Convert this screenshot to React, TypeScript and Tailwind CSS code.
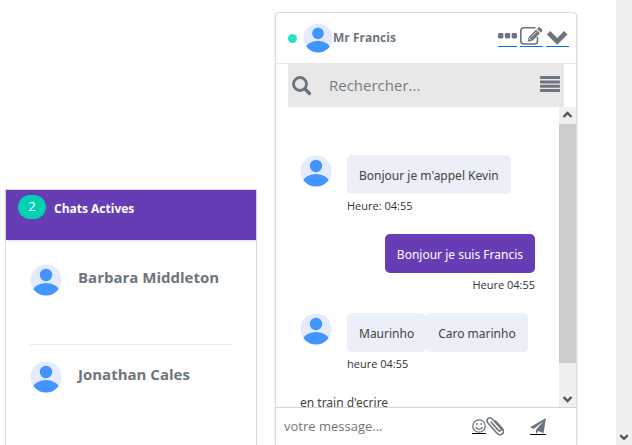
import type { ReactNode } from "react";

function Avatar({ small = false }: { small?: boolean }) {
  return (
    <svg viewBox="0 0 32 32" className={small ? "size-[30px] shrink-0" : "size-8 shrink-0"} role="img" aria-label="avatar">
      <defs>
        <clipPath id="face">
          <circle cx="16" cy="16" r="15.5" />
        </clipPath>
      </defs>
      <circle cx="16" cy="16" r="15.5" fill="#e4ebff" />
      <circle cx="16" cy="11" r="6.2" fill="#4294ff" />
      <ellipse cx="16" cy="28.5" rx="13.5" ry="9.5" fill="#4294ff" clipPath="url(#face)" />
    </svg>
  );
}

function DotsIcon() {
  return (
    <svg viewBox="0 0 19 20" className="h-5 w-[19px]" fill="#6c757d">
      <rect x="0" y="7" width="5.4" height="5.4" rx="1.4" />
      <rect x="6.8" y="7" width="5.4" height="5.4" rx="1.4" />
      <rect x="13.6" y="7" width="5.4" height="5.4" rx="1.4" />
    </svg>
  );
}

function EditIcon() {
  return (
    <svg viewBox="0 0 23 20" className="h-5 w-[23px]">
      <path d="M15 1.800H4Q.8 1.800.8 5v9.800q0 3.200 3.200 3.200h10.500q3 0 3-3v-3.500" fill="none" stroke="#6c757d" strokeWidth="1.600" strokeLinecap="round" />
      <path d="M7.800 15.800l1-4.800 7.400-7.400 3.800 3.700-7.500 7.500z" fill="#6c757d" />
      <path d="M17 2.800l1.300-1.300q.8-.7 1.600 0l2.100 2.100q.7.800 0 1.600L20.800 6.500z" fill="#6c757d" />
      <path d="M11 11.400l5.800-5.800M9.300 12.200l2 2" stroke="#fff" strokeWidth=".8" />
    </svg>
  );
}

function ChevronIcon() {
  return (
    <svg viewBox="0 0 23 20" className="h-5 w-[23px]">
      <path d="M2.600 6.800l8.600 8.600 8.600-8.600" fill="none" stroke="#6c757d" strokeWidth="4.800" />
    </svg>
  );
}

function SearchIcon() {
  return (
    <svg viewBox="0 0 20 20" className="size-5 shrink-0" fill="none" stroke="#6c757d">
      <circle cx="8" cy="8" r="6.500" strokeWidth="2.900" />
      <path d="M13 13l4.500 4.500" strokeWidth="3.400" strokeLinecap="round" />
    </svg>
  );
}

function LinesIcon() {
  return (
    <svg viewBox="0 0 20 16" className="h-4 w-5" fill="#6c757d">
      <rect width="20" height="3" rx=".6" />
      <rect y="4.400" width="20" height="3" rx=".6" />
      <rect y="8.700" width="20" height="3" rx=".6" />
      <rect y="13" width="20" height="3" rx=".6" />
    </svg>
  );
}

function SmileIcon() {
  return (
    <svg viewBox="0 0 14 14" className="size-3.5" fill="none" stroke="#6c757d">
      <circle cx="7" cy="7" r="6.200" strokeWidth="1.300" />
      <circle cx="4.800" cy="5" r=".9" fill="#6c757d" stroke="none" />
      <circle cx="9.200" cy="5" r=".9" fill="#6c757d" stroke="none" />
      <path d="M3.800 8.500q3.200 3.600 6.400 0" strokeWidth="1.200" strokeLinecap="round" />
    </svg>
  );
}

function ClipIcon() {
  return (
    <svg viewBox="0 0 18 20" className="h-5 w-[18px]">
      <path
        d="M5.200 6.200l7 7.900q1.400 1.400 2.500.4t-.2-2.500L6.500 3.200Q4 .7 1.900 2.500T2 7.100l8.500 9.600q3.200 3.400 5.800 1.200t-.3-5.700L9.500 5"
        fill="none"
        stroke="#6c757d"
        strokeWidth="1.600"
        strokeLinecap="round"
      />
    </svg>
  );
}

function PlaneIcon() {
  return (
    <svg viewBox="0 0 16 16" className="size-4" fill="#6c757d">
      <path d="M16 0L0 9.300l3.800 1.600L13.500 3 6 11.800V16l2.300-3 5.200 2.200z" />
    </svg>
  );
}

function ScrollArrow({ up = false }: { up?: boolean }) {
  return (
    <svg viewBox="0 0 17 17" className="h-[17px] w-full shrink-0" fill="none">
      <path d={up ? "M4.500 10l4-4 4 4" : "M4.500 7l4 4 4-4"} stroke="#555" strokeWidth="2.400" />
    </svg>
  );
}

function Contact({ name }: { name: string }) {
  return (
    <li className="flex h-[97px] items-start border-b border-[#ebebeb] pt-4 last:border-b-0">
      <Avatar />
      <a href="#" className="ml-4 text-[15px] leading-[26px] font-bold text-[#6c757d]">
        {name}
      </a>
    </li>
  );
}

function Bubble({ children, className }: { children: ReactNode; className: string }) {
  return <p className={`rounded-[5px] px-3 pt-[11px] pb-2 font-['Noto_Sans',sans-serif] text-xs leading-5 whitespace-nowrap ${className}`}>{children}</p>;
}

function Time({ children }: { children: ReactNode }) {
  return <p className="pt-1 text-[11px] leading-4 text-[#333]">{children}</p>;
}

function Received({ texts, time }: { texts: string[]; time: string }) {
  return (
    <li className="flex items-start">
      <Avatar />
      <div className="ml-[15px]">
        <div className="flex">
          {texts.map((text) => (
            <Bubble key={text} className="bg-[#ebeff7] text-[#444]">{text}</Bubble>
          ))}
        </div>
        <Time>{time}</Time>
      </div>
    </li>
  );
}

export default function App() {
  return (
    <div className="flex h-screen overflow-hidden bg-white font-['Open_Sans',sans-serif]">
      <main className="grid flex-1 grid-cols-[minmax(0,252px)_minmax(0,302px)] gap-[18px] pt-3 pl-[5px]">
        <aside className="mt-[177px] border border-b-0 border-[#dcdcdc] shadow-xs">
          <header className="flex h-[50px] items-start gap-2 bg-[#673db6] px-3 pt-[5px] text-white shadow-sm">
            <span className="flex h-6 w-7 items-center justify-center rounded-full bg-[#00d1b2] text-[13px]">2</span>
            <h2 className="pt-1 text-xs leading-5 font-bold">Chats Actives</h2>
          </header>
          <ul className="px-6 pt-2">
            <Contact name="Barbara Middleton" />
            <Contact name="Jonathan Cales" />
          </ul>
        </aside>

        <section className="flex min-h-0 flex-col rounded-t-sm border border-b-0 border-[#dcdcdc] shadow-sm">
          <header className="flex h-[51px] shrink-0 items-center border-b border-[#e8e8e8] pr-[7px] pl-3">
            <span className="mr-1.5 size-[9px] rounded-full bg-[#2be0c8]" />
            <Avatar small />
            <h2 className="text-xs font-bold text-[#6c757d]">Mr Francis</h2>
            <nav className="ml-auto flex gap-[3px] pb-1">
              <a href="#" aria-label="Options" className="border-b border-[#0d6efd]"><DotsIcon /></a>
              <a href="#" aria-label="Modifier" className="border-b border-[#0d6efd]"><EditIcon /></a>
              <a href="#" aria-label="Réduire" className="border-b border-[#0d6efd]"><ChevronIcon /></a>
            </nav>
          </header>

          <form className="mx-3 flex h-[43px] shrink-0 items-center bg-[#e8e8e8] px-1">
            <SearchIcon />
            <input
              aria-label="Rechercher"
              placeholder="Rechercher..."
              className="ml-[17px] min-w-0 flex-1 text-[15px] text-[#6c757d] outline-none placeholder:text-[#757d84]"
            />
            <button type="button" aria-label="Menu" className="pb-1"><LinesIcon /></button>
          </form>

          <div className="flex h-[300px] shrink-0">
            <div className="min-w-0 flex-1 overflow-hidden pt-12 pr-6 pl-6">
              <ul className="flex flex-col gap-5">
                <Received texts={["Bonjour je m'appel Kevin"]} time="Heure: 04:55" />
                <li className="flex flex-col items-end">
                  <Bubble className="bg-[#673db6] text-white">Bonjour je suis Francis</Bubble>
                  <Time>Heure 04:55</Time>
                </li>
                <Received texts={["Maurinho", "Caro marinho"]} time="heure 04:55" />
                <li className="pt-px font-['Noto_Sans',sans-serif] text-xs leading-5 text-[#444]">en train d'ecrire</li>
              </ul>
            </div>
            <div className="flex w-[17px] flex-col bg-[#f0f0f0]">
              <ScrollArrow up />
              <div className="mb-auto h-[239px] bg-[#cdcdcd]" />
              <ScrollArrow />
            </div>
          </div>

          <form className="flex shrink-0 items-center border-t border-[#d4d4d4] pt-2 pr-[30px] pl-2">
            <input
              aria-label="votre message"
              placeholder="votre message..."
              className="min-w-0 flex-1 text-[13px] leading-5 outline-none placeholder:text-[#757575]"
            />
            <button type="button" aria-label="Emoji" className="border-b border-black"><SmileIcon /></button>
            <button type="button" aria-label="Joindre"><ClipIcon /></button>
            <button type="submit" aria-label="Envoyer" className="ml-[26px] border-b border-black"><PlaneIcon /></button>
          </form>
        </section>
      </main>
      <div className="flex w-4 flex-col justify-end bg-[#f0f0f0]">
        <ScrollArrow />
      </div>
    </div>
  );
}
